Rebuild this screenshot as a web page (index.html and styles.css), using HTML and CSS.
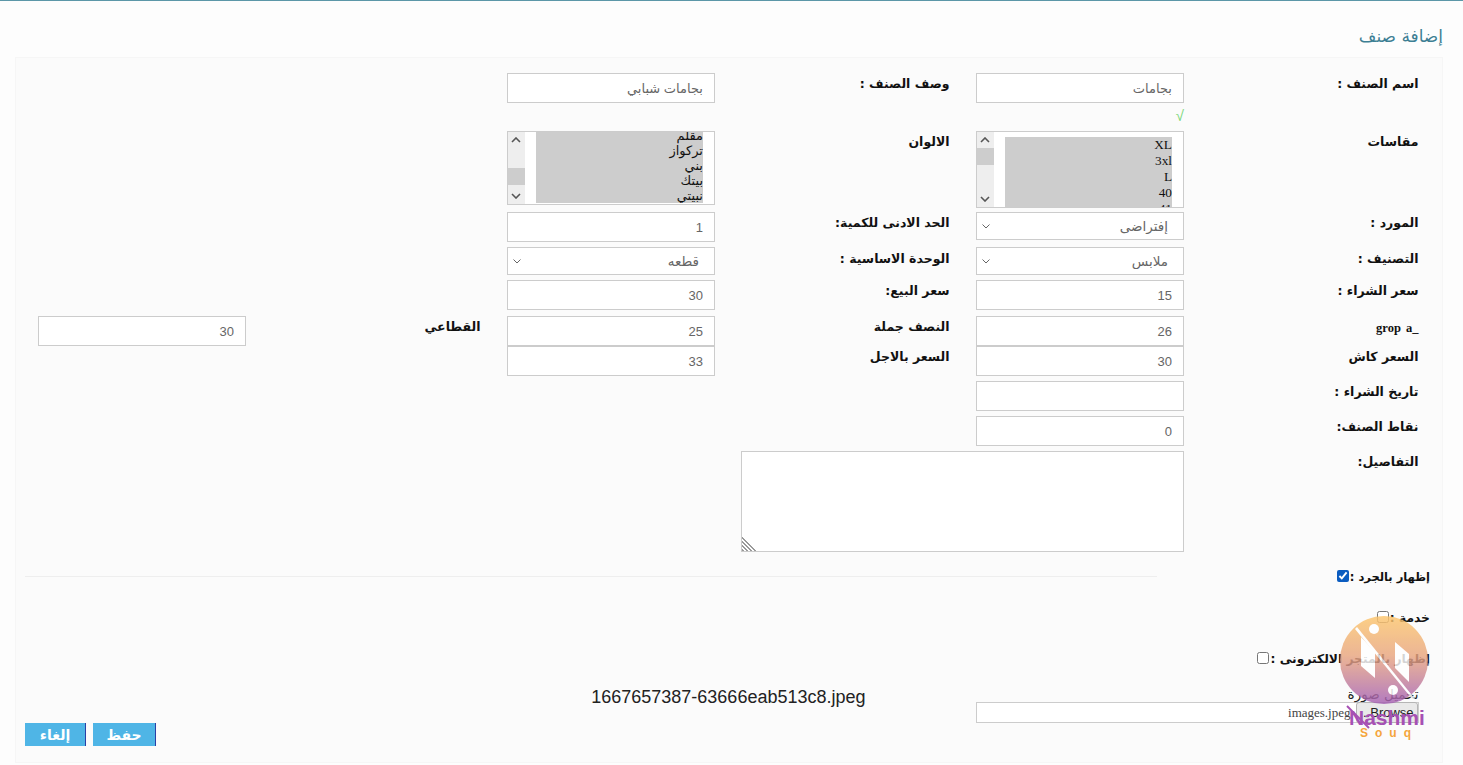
FILE: index.html
```html
<!DOCTYPE html>
<html lang="ar" dir="rtl">
<head>
    <meta charset="UTF-8">
    <meta name="viewport" content="width=device-width, initial-scale=1.0">
    <title>إضافة صنف</title>
    <link rel="stylesheet" href="styles.css">
</head>
<body>
    <h1 class="page-title">إضافة صنف</h1>

    <form class="panel">
        <div class="row row-first">
            <label class="field-label">اسم الصنف :</label>
            <div class="field"><input type="text" value="بجامات"></div>
            <label class="field-label">وصف الصنف :</label>
            <div class="field"><input type="text" value="بجامات شبابي"></div>
        </div>

        <div class="row row-check">
            <div></div>
            <div class="field"><span class="valid-mark">√</span></div>
        </div>

        <div class="row row-lists">
            <label class="field-label">مقاسات</label>
            <div class="field">
                <div class="listbox">
                    <div class="list-items list-sizes">
                        <span>XL</span><span>3xl</span><span>L</span><span>40</span><span>41</span>
                    </div>
                    <div class="scrollbar">
                        <svg class="arrow" viewBox="0 0 10 6"><path d="M1 5l4-4 4 4" /></svg>
                        <div class="track"><div class="thumb"></div></div>
                        <svg class="arrow" viewBox="0 0 10 6"><path d="M1 1l4 4 4-4" /></svg>
                    </div>
                </div>
            </div>
            <label class="field-label">الالوان</label>
            <div class="field">
                <div class="listbox listbox-short">
                    <div class="list-items list-colors">
                        <span>مقلم</span><span>تركواز</span><span>بني</span><span>بيتك</span><span>نبيتي</span>
                    </div>
                    <div class="scrollbar">
                        <svg class="arrow" viewBox="0 0 10 6"><path d="M1 5l4-4 4 4" /></svg>
                        <div class="track"><div class="thumb thumb-low"></div></div>
                        <svg class="arrow" viewBox="0 0 10 6"><path d="M1 1l4 4 4-4" /></svg>
                    </div>
                </div>
            </div>
        </div>

        <div class="row row-supplier">
            <label class="field-label">المورد :</label>
            <div class="field"><select><option>إفتراضى</option></select></div>
            <label class="field-label">الحد الادنى للكمية:</label>
            <div class="field"><input type="text" value="1"></div>
        </div>

        <div class="row row-category">
            <label class="field-label label-low">التصنيف :</label>
            <div class="field"><select><option>ملابس</option></select></div>
            <label class="field-label label-low">الوحدة الاساسية :</label>
            <div class="field"><select><option>قطعه</option></select></div>
        </div>

        <div class="row row-buy">
            <label class="field-label">سعر الشراء :</label>
            <div class="field"><input type="text" value="15"></div>
            <label class="field-label">سعر البيع:</label>
            <div class="field"><input type="text" value="30"></div>
        </div>

        <div class="row row-group">
            <label class="field-label group-label" dir="ltr">grop a_</label>
            <div class="field"><input type="text" value="26"></div>
            <label class="field-label">النصف جملة</label>
            <div class="field"><input type="text" value="25"></div>
            <label class="field-label">القطاعي</label>
            <div class="field"><input type="text" value="30"></div>
        </div>

        <div class="row">
            <label class="field-label">السعر كاش</label>
            <div class="field"><input type="text" value="30"></div>
            <label class="field-label">السعر بالاجل</label>
            <div class="field"><input type="text" value="33"></div>
        </div>

        <div class="row row-date">
            <label class="field-label">تاريخ الشراء :</label>
            <div class="field"><input type="text"></div>
        </div>

        <div class="row row-date">
            <label class="field-label">نقاط الصنف:</label>
            <div class="field"><input type="text" value="0"></div>
        </div>

        <div class="row row-details">
            <label class="field-label">التفاصيل:</label>
            <div class="field field-wide">
                <div class="details-box"><textarea></textarea></div>
            </div>
        </div>

        <div class="toggle toggle-first">
            <label>إظهار بالجرد :</label><input type="checkbox" checked>
            <hr class="divider">
        </div>
        <div class="toggle">
            <label>خدمة :</label><input type="checkbox">
        </div>
        <div class="toggle">
            <label>إظهار بالمتجر الالكترونى :</label><input type="checkbox">
        </div>

        <div class="row row-upload">
            <div class="upload field-wide">
                <span class="upload-title">تحميل صورة</span>
                <div class="file-box">
                    <button type="button" class="file-btn">Browse...</button>
                    <span class="file-name">images.jpeg</span>
                </div>
            </div>
            <div class="current-image" dir="ltr">1667657387-63666eab513c8.jpeg</div>
        </div>

        <div class="actions">
            <button type="button" class="btn btn-save">حفظ</button>
            <button type="button" class="btn btn-cancel">إلغاء</button>
        </div>
    </form>

    <div class="watermark">
        <svg class="logo" viewBox="0 0 88 88">
            <defs>
                <linearGradient id="logoFill" x1="0" y1="0" x2="0" y2="1">
                    <stop offset="0" stop-color="#fdc66c" />
                    <stop offset="0.45" stop-color="#e9a67f" />
                    <stop offset="1" stop-color="#a45fb4" />
                </linearGradient>
            </defs>
            <circle cx="44" cy="44" r="44" fill="url(#logoFill)" />
            <path class="logo-mark" d="M21 21l14 15v26L21 50z" />
            <path class="logo-mark" d="M69 66L55 52V26l14 12z" />
            <path class="logo-mark" d="M17 11l58 72-2 1L15 13z" />
            <circle class="logo-mark" cx="34" cy="13" r="5" />
            <circle class="logo-mark" cx="53" cy="74" r="5" />
        </svg>
        <svg class="swoosh" viewBox="0 0 24 24"><path d="M1 1l22 22" /></svg>
        <div class="brand">Nashmi</div>
        <div class="brand-sub">Souq</div>
    </div>
</body>
</html>
```

FILE: styles.css
```css
* {
    box-sizing: border-box;
}

body {
    margin: 0;
    height: 765px;
    overflow: hidden;
    background-color: #fdfdfd;
    border-top: 1px solid #5c97a8;
    font-family: "DejaVu Sans", "Liberation Sans", sans-serif;
    font-size: 13px;
    color: #111;
    position: relative;
}

.page-title {
    margin: 0;
    padding: 24px 20px 0 0;
    height: 56px;
    font-size: 17px;
    line-height: 22px;
    font-weight: normal;
    color: #3d7f94;
}

.panel {
    margin: 0 20px 0 15px;
    padding: 15px 10.5px 0 9px;
    height: 706px;
    background-color: #fbfbfb;
    border: 1px solid #f6f6f6;
}

.row {
    display: grid;
    grid-template-columns: repeat(6, 234.5px);
}

.field-label {
    padding: 1px 13px 0;
    font-weight: bold;
    font-size: 12.5px;
    line-height: 20px;
}

.label-low {
    padding-top: 2px;
}

.group-label {
    font-family: "Liberation Serif", serif;
    font-size: 12.5px;
    line-height: 22px;
    word-spacing: 2px;
    text-align: right;
}

.field {
    padding: 0 13px;
}

.field-wide {
    grid-column: span 2;
}

input[type="text"], select, textarea {
    display: block;
    width: 100%;
    height: 30px;
    border: 1px solid #ccc;
    background-color: #fff;
    font-family: "Liberation Sans", "DejaVu Sans", sans-serif;
    font-size: 13px;
    color: #666;
    padding: 1px 11px 0;
    border-radius: 0;
}

select {
    height: 28px;
    appearance: none;
    font-family: "DejaVu Sans", sans-serif;
    font-size: 13.5px;
    padding: 0 15px 0 20px;
    background-image: url("data:image/svg+xml,%3Csvg xmlns='http://www.w3.org/2000/svg' width='8' height='5'%3E%3Cpath d='M.5.5L4 4 7.5.5' fill='none' stroke='%23666'/%3E%3C/svg%3E");
    background-repeat: no-repeat;
    background-position: 5px center;
}

.details-box {
    position: relative;
}

.details-box::after {
    content: "";
    position: absolute;
    left: 1px;
    bottom: 1px;
    width: 15px;
    height: 15px;
    background: repeating-linear-gradient(45deg, #999 0, #999 1.5px, #fff 1.5px, #fff 3px);
    clip-path: polygon(0 0, 100% 100%, 0 100%);
}

textarea {
    height: 101px;
    resize: none;
}

.row-first {
    height: 31px;
}

.row-check {
    height: 27px;
}

.valid-mark {
    display: block;
    height: 27px;
    line-height: 24px;
    font-family: "Liberation Sans", sans-serif;
    font-size: 15px;
    color: #7ad77a;
    text-align: right;
}

.row-lists {
    height: 81px;
}

.listbox {
    display: flex;
    height: 77px;
    border: 1px solid #ccc;
    background-color: #fff;
    overflow: hidden;
}

.listbox-short {
    height: 74px;
}

.list-items {
    flex: 1;
    margin: 5px 11px 0 11px;
    background-color: #cdcdcd;
    font-family: "Liberation Serif", "DejaVu Sans", serif;
    font-size: 13.3px;
    color: #111;
    overflow: hidden;
}

.list-colors {
    margin-top: 0;
    margin-bottom: 1px;
    font-family: "DejaVu Sans", sans-serif;
    font-size: 13px;
}

.list-items span {
    display: block;
    height: 16px;
    line-height: 16px;
}

.list-colors span {
    height: 15px;
}

.list-colors span:first-child {
    margin-top: -4px;
}

.scrollbar {
    width: 17px;
    display: flex;
    flex-direction: column;
    background-color: #eee;
}

.arrow {
    display: block;
    width: 10px;
    height: 6px;
    margin: 5px auto;
    flex: none;
    fill: none;
    stroke: #555;
    stroke-width: 1.6;
}

.track {
    flex: 1;
}

.thumb {
    height: 17px;
    background-color: #cdcdcd;
}

.thumb-low {
    margin-top: 20px;
}

.row-supplier {
    height: 35px;
}

.row-category {
    height: 33px;
}

.row-buy {
    height: 36px;
}

.row-group {
    height: 30px;
}

.row-date {
    margin-top: 5px;
    height: 30px;
}

.row-details {
    margin-top: 5px;
    height: 101px;
}

.toggle {
    display: flex;
    align-items: flex-start;
    height: 41px;
    margin-right: -10.5px;
    padding-right: 12px;
    font-weight: bold;
    font-size: 12.3px;
    line-height: 20px;
}

.toggle input {
    width: 12px;
    height: 12px;
    margin: 0 1px 0 0;
    position: relative;
    top: 3px;
}

.toggle input:checked {
    accent-color: #0b5cc0;
}

.toggle-first {
    margin-top: 15px;
    font-size: 11.5px;
}

.divider {
    flex: 1;
    margin: 9px 180px 0 0;
    border: 0;
    border-top: 1px solid #eee;
}

.row-upload {
    height: 37px;
    margin-top: -4px;
}

.upload {
    padding: 0 13px;
}

.upload-title {
    display: block;
    height: 16px;
    line-height: 16px;
    font-size: 13.5px;
    color: #222;
}

.file-box {
    display: flex;
    align-items: center;
    height: 21px;
    border: 1px solid #ccc;
    background-color: #fff;
}

.file-btn {
    height: 21px;
    width: 62px;
    padding: 0;
    margin: 0 0 0 5px;
    border: 1px solid #b5b5b5;
    border-radius: 3px;
    background-color: #e9e9e9;
    font-family: "Liberation Sans", sans-serif;
    font-size: 13px;
    color: #222;
}

.file-name {
    font-family: "Liberation Serif", serif;
    font-size: 13px;
    color: #444;
}

.current-image {
    grid-column: span 2;
    margin-right: 97px;
    padding-top: 1px;
    font-family: "Liberation Sans", sans-serif;
    font-size: 18px;
    color: #222;
    white-space: nowrap;
    text-align: right;
}

.actions {
    display: flex;
    justify-content: flex-end;
    gap: 7px;
}

.btn {
    height: 23px;
    padding: 0;
    border: 0;
    border-right: 1px solid #2a3fa5;
    background-color: #4fb5e6;
    color: #fff;
    font-family: "DejaVu Sans", sans-serif;
    font-weight: bold;
    font-size: 14px;
}

.btn-save {
    width: 63px;
}

.btn-cancel {
    width: 61px;
}

.watermark {
    position: absolute;
    left: 1340px;
    top: 615px;
    width: 88px;
}

.logo {
    display: block;
    width: 88px;
    height: 88px;
    opacity: 0.82;
}

.logo-mark {
    fill: #fff;
}

.swoosh {
    position: absolute;
    left: 6px;
    top: 89px;
    width: 24px;
    height: 24px;
    fill: none;
    stroke: #a650b4;
    stroke-width: 2;
}

.brand {
    margin: 3px 0 0 9px;
    font-family: "Liberation Sans", sans-serif;
    font-weight: bold;
    font-size: 21px;
    line-height: 22px;
    color: #a650b4;
    direction: ltr;
    text-align: left;
}

.brand-sub {
    margin: -2px 0 0 20px;
    font-family: "Liberation Sans", sans-serif;
    font-weight: bold;
    font-size: 12px;
    line-height: 12px;
    letter-spacing: 7px;
    color: #f5a53c;
    direction: ltr;
    text-align: left;
}
```
